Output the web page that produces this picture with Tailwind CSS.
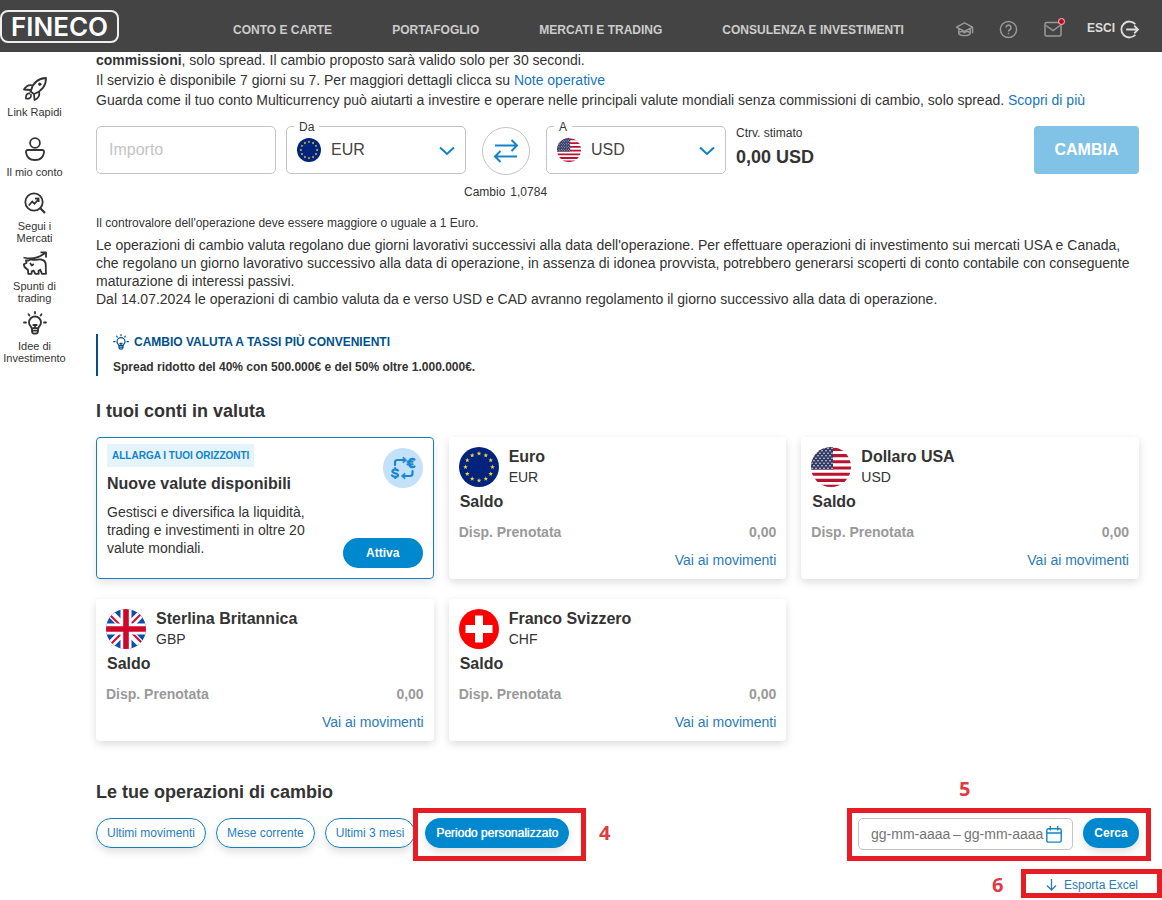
<!DOCTYPE html>
<html lang="it">
<head>
<meta charset="utf-8">
<meta name="viewport" content="width=device-width, initial-scale=1">
<title>Fineco - Multicurrency</title>
<script src="https://cdn.jsdelivr.net/npm/@tailwindcss/browser@4"></script>
</head>
<body class="min-h-screen overflow-x-hidden bg-white font-['Liberation_Sans',Arial,sans-serif] text-sm text-[#333]">

<svg class="absolute size-0" aria-hidden="true">
  <defs>
    <clipPath id="disc"><circle cx="20" cy="20" r="20"/></clipPath>
    <path id="star" d="M0-2.400 .6-.8 2.300-.7 1 .4 1.400 2 0 1.100-1.400 2-1 .4-2.300-.7-.6-.8Z" fill="#f2cf3c"/>
    <symbol id="flag-eu" viewBox="0 0 40 40">
      <circle cx="20" cy="20" r="20" fill="#00247d"/>
      <use href="#star" x="20" y="6.5"/><use href="#star" x="26.8" y="8.3"/><use href="#star" x="31.7" y="13.2"/>
      <use href="#star" x="33.5" y="20"/><use href="#star" x="31.7" y="26.8"/><use href="#star" x="26.8" y="31.7"/>
      <use href="#star" x="20" y="33.5"/><use href="#star" x="13.2" y="31.7"/><use href="#star" x="8.3" y="26.8"/>
      <use href="#star" x="6.5" y="20"/><use href="#star" x="8.3" y="13.2"/><use href="#star" x="13.2" y="8.3"/>
    </symbol>
    <pattern id="dots" width="4" height="5" patternUnits="userSpaceOnUse"><circle cx="1" cy="1.2" r=".75" fill="#fff"/><circle cx="3" cy="3.7" r=".75" fill="#fff"/></pattern>
    <symbol id="flag-us" viewBox="0 0 40 40">
      <g clip-path="url(#disc)">
        <rect width="40" height="40" fill="#fff"/>
        <path d="M0 2.400h40M0 8.600h40M0 14.800h40M0 21h40M0 27.200h40M0 33.400h40M0 39.200h40" stroke="#b9132f" stroke-width="3.1"/>
        <rect width="22" height="22.500" fill="#323a66"/><rect width="22" height="22" fill="url(#dots)"/>
      </g>
    </symbol>
    <symbol id="flag-gb" viewBox="0 0 40 40">
      <g clip-path="url(#disc)">
        <rect width="40" height="40" fill="#0a50a8"/>
        <path d="M0 0 40 40M40 0 0 40" stroke="#fff" stroke-width="7.5"/>
        <path d="M-1 1 20 22M41 39 20 18M41-1 20 20M-1 41 20 20" stroke="#d80a30" stroke-width="2"/>
        <path d="M20 0v40M0 20h40" stroke="#fff" stroke-width="11"/>
        <path d="M20 0v40M0 20h40" stroke="#d0072c" stroke-width="5.6"/>
      </g>
    </symbol>
    <symbol id="flag-ch" viewBox="0 0 40 40">
      <circle cx="20" cy="20" r="20" fill="#fe0000"/><path d="M20 6.500v27M6.500 20h27" stroke="#fff" stroke-width="8"/>
    </symbol>
    <symbol id="bulb" viewBox="0 0 24 24">
      <g fill="none" stroke="currentColor" stroke-width="1.8" stroke-linecap="round" stroke-linejoin="round">
        <path d="M8.600 17.200C8.600 15.400 6 14.600 6 11.500a6 6 0 0 1 12 0C18 14.600 15.400 15.400 15.400 17.200ZM9 17.500v2.700c0 1.300 1 2.500 3 2.500s3-1.200 3-2.500v-2.700M9.200 19.700h5.600M10.300 14h3.400M12 14v3"/>
        <path d="M12 1v1.500M5.500 3.300l.9 1.200M18.500 3.300l-.9 1.200M1 11.500h2M21 11.500h2"/>
      </g>
    </symbol>
  </defs>
</svg>

<header class="relative z-10 flex h-[52px] items-center bg-[#444] pr-[23px] text-xs font-bold text-[#ccc]">
  <a href="#" class="flex h-[33px] w-[119px] shrink-0 items-center justify-center rounded-lg border-2 border-[#eee] pt-px font-[Inter,sans-serif] text-[26px] font-semibold leading-none text-white">FINECO</a>
  <nav class="ml-[114px] mt-[7px] flex gap-[60px] whitespace-nowrap">
    <a href="#">CONTO E CARTE</a>
    <a href="#">PORTAFOGLIO</a>
    <a href="#">MERCATI E TRADING</a>
    <a href="#">CONSULENZA E INVESTIMENTI</a>
  </nav>
  <div class="ml-auto mt-[6px] flex items-center text-[#999]">
    <a href="#" aria-label="Formazione" class="mr-[25px]">
      <svg class="size-[19px]" viewBox="0 0 20 20" fill="none" stroke="currentColor" stroke-width="1.5" stroke-linejoin="round"><path d="M1.500 7.500 10 3l8.500 4.500L10 12ZM4 9v5.500c2 2.600 10 2.600 12 0V9M18.500 7.500V14M4.500 13c2-1.400 4-1.200 5.500.5 1.500-1.700 3.500-1.900 5.500-.5"/></svg>
    </a>
    <a href="#" aria-label="Aiuto" class="mr-[26px]">
      <svg class="size-[19px]" viewBox="0 0 20 20" fill="none" stroke="currentColor" stroke-width="1.5"><circle cx="10" cy="10" r="8.500"/><path d="M7.400 8a2.600 2.600 0 1 1 3.900 2.300c-.9.500-1.300.9-1.300 1.900M10 13.400v1.600" stroke-width="1.700"/></svg>
    </a>
    <a href="#" aria-label="Messaggi" class="relative mr-[25px]">
      <svg class="size-[18px]" viewBox="0 0 18 18" fill="none" stroke="currentColor" stroke-width="1.500"><rect x="1" y="2.500" width="16" height="13.500" rx="1.500"/><path d="m2 5.500 7 5 7-5"/></svg>
      <span class="absolute -right-[3px] -top-[2px] size-[7px] rounded-full border border-[#f5c9c9] bg-[#d0021b]"></span>
    </a>
    <a href="#" class="flex items-center gap-[5px] text-[#ddd]">
      <span class="-mt-[2px]">ESCI</span>
      <svg class="size-[19px]" viewBox="0 0 20 20" fill="none" stroke="currentColor" stroke-width="1.900"><path d="M16.200 4.500a8.400 8.400 0 1 0 0 11M6.500 10H19M15 6l4 4-4 4"/></svg>
    </a>
  </div>
</header>

<div class="-mt-[2px] flex">
  <aside class="w-[69px] shrink-0 pt-[27px] text-center text-[11px] leading-3">
    <nav class="flex flex-col">
      <a href="#" class="mb-[19px] flex flex-col items-center gap-[5px]">
        <svg class="size-6" viewBox="0 0 24 24" fill="none" stroke="currentColor" stroke-width="1.800" stroke-linejoin="round" stroke-linecap="round"><path d="M8 13.500C9.500 7.500 14 1.500 23 1c0 8.500-5 13.500-12 16L7.500 14.500ZM10 8.500C6 7.500 3 9 1 12.500l6.500.5M16 14.500c1 4-1 7-4.500 8.500L11 17"/><circle cx="16.800" cy="7.200" r="1.200" fill="currentColor" stroke-width="1"/><path d="M6.500 16.500c-2.500-.5-4 2-3.500 5 3 .8 5.500-1 5-3.500"/></svg>
        <span>Link Rapidi</span>
      </a>
      <a href="#" class="mb-[13px] flex flex-col items-center gap-[5px]">
        <svg class="size-6" viewBox="0 0 24 24" fill="none" stroke="currentColor" stroke-width="1.800" stroke-linejoin="round"><circle cx="12" cy="6" r="4.900"/><path d="M5 13h14c1.500 0 2.200 1 2 2.300-.6 5-3.900 7.700-9 7.700s-8.400-2.700-9-7.700c-.2-1.300.5-2.300 2-2.300Z"/></svg>
        <span>Il mio conto</span>
      </a>
      <a href="#" class="mb-[7px] flex flex-col items-center gap-[5px]">
        <svg class="size-6" viewBox="0 0 24 24" fill="none" stroke="currentColor" stroke-width="1.800"><circle cx="11" cy="11" r="8.700"/><path d="m17.300 17.300 4.700 4.700" stroke-width="2.200"/><path d="m5.800 14.500 3.400-4 2.300 2.300 3.500-4M12 7.700l3.500-.2.200 3.500"/></svg>
        <span>Segui i<br>Mercati</span>
      </a>
      <a href="#" class="mb-[7px] flex flex-col items-center gap-[5px]">
        <svg class="size-6" viewBox="0 0 24 24" fill="none" stroke="currentColor" stroke-width="1.800" stroke-linejoin="round"><path d="M.5 6.500c9 2.200 16 .5 22-5M17.500 1.300H23V6.500"/><path d="M5.500 9.500 8 8.300c4 1.700 7-.3 10 .2 3.500.5 4.800 3 4.800 6V19l.2 3.800h-4l-1.700-4-1.800 1 .2 3h-3.400l-1.800-3.300-1.700.8-.3 2.500H5.200L5 19l-3.500-3L.8 13.200 3.500 12 3 9.500Z"/><path d="m7 12 1.800 2.500 2-1.500"/></svg>
        <span>Spunti di<br>trading</span>
      </a>
      <a href="#" class="flex flex-col items-center gap-[5px]">
        <svg class="size-6"><use href="#bulb"/></svg>
        <span>Idee di<br>Investimento</span>
      </a>
    </nav>
  </aside>

  <main class="min-w-0 grow pb-[7px] pl-[27px] pr-[23px]">
    <p class="leading-5"><b>commissioni</b>, solo spread. Il cambio proposto sarà valido solo per 30 secondi.<br>
      Il servizio è disponibile 7 giorni su 7. Per maggiori dettagli clicca su <a href="#" class="text-[#1876bc]">Note operative</a><br>
      Guarda come il tuo conto Multicurrency può aiutarti a investire e operare nelle principali valute mondiali senza commissioni di cambio, solo spread. <a href="#" class="text-[#1876bc]">Scopri di più</a></p>

    <form class="mt-4 flex items-start">
      <input type="text" aria-label="Importo" placeholder="Importo" class="h-12 w-[180px] rounded-[5px] border border-[#c4c4c4] px-3 text-base placeholder:text-[#c4c4c4]">
      <div class="relative ml-[10px] w-[180px]">
        <label for="from" class="absolute -top-[6px] left-2 bg-white px-[5px] text-xs leading-[14px]">Da</label>
        <svg class="pointer-events-none absolute left-[11px] top-3 size-6"><use href="#flag-eu"/></svg>
        <select id="from" class="h-12 w-full appearance-none rounded-[5px] border border-[#c4c4c4] bg-transparent pl-[44px] text-base text-[#444]"><option>EUR</option></select>
        <svg class="pointer-events-none absolute right-[11px] top-5 h-[10px] w-4" viewBox="0 0 16 10" fill="none" stroke="#0f80c4" stroke-width="2"><path d="m1 1.500 7 6.500 7-6.500"/></svg>
      </div>
      <button type="button" aria-label="Inverti valute" class="ml-4 mt-[1px] flex size-12 items-center justify-center rounded-full border border-[#c4c4c4]">
        <svg class="size-[26px]" viewBox="0 0 26 26" fill="none" stroke="#1583c6" stroke-width="2"><path d="M2 7.500h22M18.500 2l5.500 5.500-5.500 5.500M24 18.500H2M7.500 13 2 18.500 7.500 24"/></svg>
      </button>
      <div class="relative ml-4 w-[180px]">
        <label for="to" class="absolute -top-[6px] left-2 bg-white px-[5px] text-xs leading-[14px]">A</label>
        <svg class="pointer-events-none absolute left-[11px] top-3 size-6"><use href="#flag-us"/></svg>
        <select id="to" class="h-12 w-full appearance-none rounded-[5px] border border-[#c4c4c4] bg-transparent pl-[44px] text-base text-[#444]"><option>USD</option></select>
        <svg class="pointer-events-none absolute right-[11px] top-5 h-[10px] w-4" viewBox="0 0 16 10" fill="none" stroke="#0f80c4" stroke-width="2"><path d="m1 1.500 7 6.500 7-6.500"/></svg>
      </div>
      <div class="ml-[10px]">
        <div class="text-xs leading-[14px]">Ctrv. stimato</div>
        <div class="mt-[6px] text-lg font-bold leading-[22px]">0,00 USD</div>
      </div>
      <button type="button" class="ml-auto h-12 w-[105px] rounded-[4px] bg-[#80c3e6] text-base font-bold text-white">CAMBIA</button>
    </form>
    <div class="mt-[9px] flex gap-[5px] pl-[368px] text-xs leading-4"><span>Cambio</span><span>1,0784</span></div>

    <p class="mt-[15px] text-xs leading-4">Il controvalore dell'operazione deve essere maggiore o uguale a 1 Euro.</p>
    <p class="mt-[5px] leading-[18px]">Le operazioni di cambio valuta regolano due giorni lavorativi successivi alla data dell'operazione. Per effettuare operazioni di investimento sui mercati USA e Canada, che regolano un giorno lavorativo successivo alla data di operazione, in assenza di idonea provvista, potrebbero generarsi scoperti di conto contabile con conseguente maturazione di interessi passivi.<br>
      Dal 14.07.2024 le operazioni di cambio valuta da e verso USD e CAD avranno regolamento il giorno successivo alla data di operazione.</p>

    <section class="mt-[26px] h-[42px] border-l-2 border-[#00508f] pl-[15px] text-xs font-bold">
      <h3 class="flex items-center gap-[5px] leading-4 text-[#00508f]"><svg class="size-4 shrink-0"><use href="#bulb"/></svg>CAMBIO VALUTA A TASSI PIÙ CONVENIENTI</h3>
      <p class="mt-[9px] leading-4">Spread ridotto del 40% con 500.000€ e del 50% oltre 1.000.000€.</p>
    </section>

    <h2 class="mt-6 text-lg font-bold leading-[22px]">I tuoi conti in valuta</h2>

    <div class="mt-[15px] grid grid-cols-3 gap-x-[15px] gap-y-5">
      <article class="flex h-[142px] justify-between rounded-[4px] border border-[#0f80c0] pb-[10px] pl-[10px] pr-[10px] pt-[6px] shadow-[0_4px_8px_rgba(0,0,0,0.1)]">
        <div>
          <div class="inline-block bg-[#e5f3fb] px-[5px] text-[10px] font-bold leading-[23px] text-[#0f84cb]">ALLARGA I TUOI ORIZZONTI</div>
          <h3 class="mt-[7px] text-base font-bold leading-5">Nuove valute disponibili</h3>
          <p class="mt-[9px] w-[210px] leading-[18px]">Gestisci e diversifica la liquidità, trading e investimenti in oltre 20 valute mondiali.</p>
        </div>
        <div class="flex flex-col items-end justify-between pt-1">
          <svg class="size-10" viewBox="0 0 40 40" fill="none" stroke="#1a86d0" stroke-width="2.2" stroke-linecap="round" stroke-linejoin="round"><circle cx="20" cy="20" r="20" fill="#c3e1f8" stroke="none"/><path d="M12 17v-2.500c0-1.800.8-2.500 2.500-2.500H21"/><path d="m20.500 9.300 3 2.700-3 2.700Z" fill="#1a86d0" stroke-width="1"/><path d="M29.500 23v2.500c0 1.800-.8 2.500-2.500 2.500h-6"/><path d="m21.500 25.300-3 2.700 3 2.700Z" fill="#1a86d0" stroke-width="1"/><path d="M31.500 11.500c-3-1.800-5.500 0-5.500 3.500s2.500 5.300 5.500 3.500M24.500 13.700h5M24.500 16.300h5"/><path d="M15 22.500c-1.500-1.500-5.500-1-5.500 1s5.500 1.500 5.500 3.700-4.200 2.200-6 .3M12.200 20v1.500M12.200 29v1"/></svg>
          <button type="button" class="h-[30px] w-20 rounded-full bg-[#0088ce] text-xs font-bold text-white">Attiva</button>
        </div>
      </article>

      <article class="h-[142px] rounded-[4px] p-[10px] shadow-[0_3px_8px_rgba(0,0,0,0.14)]">
        <div class="flex gap-[10px]"><svg class="size-10"><use href="#flag-eu"/></svg><div class="leading-5"><h3 class="text-base font-bold leading-5">Euro</h3>EUR</div></div>
        <div class="mt-[5px] pl-px text-base font-bold leading-5">Saldo</div>
        <div class="mt-[10px] flex justify-between font-bold leading-5 text-[#999]"><span>Disp. Prenotata</span><span>0,00</span></div>
        <div class="mt-2 text-right leading-5"><a href="#" class="text-[#2b7bb9]">Vai ai movimenti</a></div>
      </article>

      <article class="h-[142px] rounded-[4px] p-[10px] shadow-[0_3px_8px_rgba(0,0,0,0.14)]">
        <div class="flex gap-[10px]"><svg class="size-10"><use href="#flag-us"/></svg><div class="leading-5"><h3 class="text-base font-bold leading-5">Dollaro USA</h3>USD</div></div>
        <div class="mt-[5px] pl-px text-base font-bold leading-5">Saldo</div>
        <div class="mt-[10px] flex justify-between font-bold leading-5 text-[#999]"><span>Disp. Prenotata</span><span>0,00</span></div>
        <div class="mt-2 text-right leading-5"><a href="#" class="text-[#2b7bb9]">Vai ai movimenti</a></div>
      </article>

      <article class="h-[142px] rounded-[4px] p-[10px] shadow-[0_3px_8px_rgba(0,0,0,0.14)]">
        <div class="flex gap-[10px]"><svg class="size-10"><use href="#flag-gb"/></svg><div class="leading-5"><h3 class="text-base font-bold leading-5">Sterlina Britannica</h3>GBP</div></div>
        <div class="mt-[5px] pl-px text-base font-bold leading-5">Saldo</div>
        <div class="mt-[10px] flex justify-between font-bold leading-5 text-[#999]"><span>Disp. Prenotata</span><span>0,00</span></div>
        <div class="mt-2 text-right leading-5"><a href="#" class="text-[#2b7bb9]">Vai ai movimenti</a></div>
      </article>

      <article class="h-[142px] rounded-[4px] p-[10px] shadow-[0_3px_8px_rgba(0,0,0,0.14)]">
        <div class="flex gap-[10px]"><svg class="size-10"><use href="#flag-ch"/></svg><div class="leading-5"><h3 class="text-base font-bold leading-5">Franco Svizzero</h3>CHF</div></div>
        <div class="mt-[5px] pl-px text-base font-bold leading-5">Saldo</div>
        <div class="mt-[10px] flex justify-between font-bold leading-5 text-[#999]"><span>Disp. Prenotata</span><span>0,00</span></div>
        <div class="mt-2 text-right leading-5"><a href="#" class="text-[#2b7bb9]">Vai ai movimenti</a></div>
      </article>
    </div>

    <h2 class="mt-10 text-lg font-bold leading-[22px]">Le tue operazioni di cambio</h2>

    <div class="mt-[15px] flex items-start gap-[10px] text-xs">
      <button type="button" class="h-[30px] rounded-full border border-[#0f80c0] px-[10px] text-[#1f7dbf] shadow-[0_4px_8px_rgba(0,0,0,0.12)]">Ultimi movimenti</button>
      <button type="button" class="h-[30px] rounded-full border border-[#0f80c0] px-[10px] text-[#1f7dbf] shadow-[0_4px_8px_rgba(0,0,0,0.12)]">Mese corrente</button>
      <button type="button" class="h-[30px] rounded-full border border-[#0f80c0] px-[10px] text-[#1f7dbf] shadow-[0_4px_8px_rgba(0,0,0,0.12)]">Ultimi 3 mesi</button>
      <div class="relative">
        <button type="button" class="h-[30px] rounded-full border border-[#0088ce] bg-[#0088ce] px-[10px] text-white shadow-[0_4px_8px_rgba(0,0,0,0.12)] [text-shadow:0_0_1px_#fff]">Periodo personalizzato</button>
        <div class="pointer-events-none absolute -bottom-[13px] -left-3 -right-[17px] -top-[10px] border-[5px] border-[#e81c24]"></div>
        <span class="absolute -right-[41px] top-0 font-['Open_Sans',sans-serif] text-xl font-bold leading-[30px] text-[#e03a44]">4</span>
      </div>

      <form class="relative ml-auto flex items-start gap-[10px]">
        <div class="flex h-8 w-[215px] items-center rounded-[5px] border border-[#c4c4c4] pl-3 text-sm text-[#757575]">
          <input type="text" aria-label="Dal" placeholder="gg-mm-aaaa" class="w-[82px] placeholder:text-[#757575]">
          <span class="w-[11px]">–</span>
          <input type="text" aria-label="Al" placeholder="gg-mm-aaaa" class="w-[82px] placeholder:text-[#757575]">
          <svg class="h-[17px] w-4 shrink-0" viewBox="0 0 16 17" fill="none" stroke="#1583c6" stroke-width="1.400"><rect x=".8" y="2.800" width="14.400" height="13.300" rx="1.500"/><path d="M1 7h14M4.300 0v4.500M11.700 0v4.500"/></svg>
        </div>
        <button type="button" class="h-[30px] w-14 rounded-full bg-[#0088ce] text-xs font-bold text-white shadow-[0_4px_8px_rgba(0,0,0,0.12)]">Cerca</button>
        <div class="pointer-events-none absolute -bottom-[11px] -left-[11px] -right-3 -top-[10px] border-[5px] border-[#e81c24]"></div>
        <span class="absolute -top-[44px] left-[101px] font-['Open_Sans',sans-serif] text-xl font-bold leading-[30px] text-[#e03a44]">5</span>
      </form>
    </div>

    <div class="mt-[27px] flex justify-end pr-px text-xs leading-4">
      <a href="#" class="relative flex items-center gap-[7px] text-[#2b7bb9]">
        <svg class="h-3 w-[11px]" viewBox="0 0 11 12" fill="none" stroke="currentColor" stroke-width="1.300"><path d="M5.500 0v11M1 6.500 5.500 11 10 6.500"/></svg>
        Esporta Excel
        <span class="pointer-events-none absolute -bottom-[5px] -left-[25px] -right-[24px] -top-2 border-[5px] border-[#e81c24]"></span>
        <span class="absolute -left-[54px] -top-[7px] font-['Open_Sans',sans-serif] text-xl font-bold leading-[30px] text-[#e03a44]">6</span>
      </a>
    </div>
  </main>
</div>
</body>
</html>
